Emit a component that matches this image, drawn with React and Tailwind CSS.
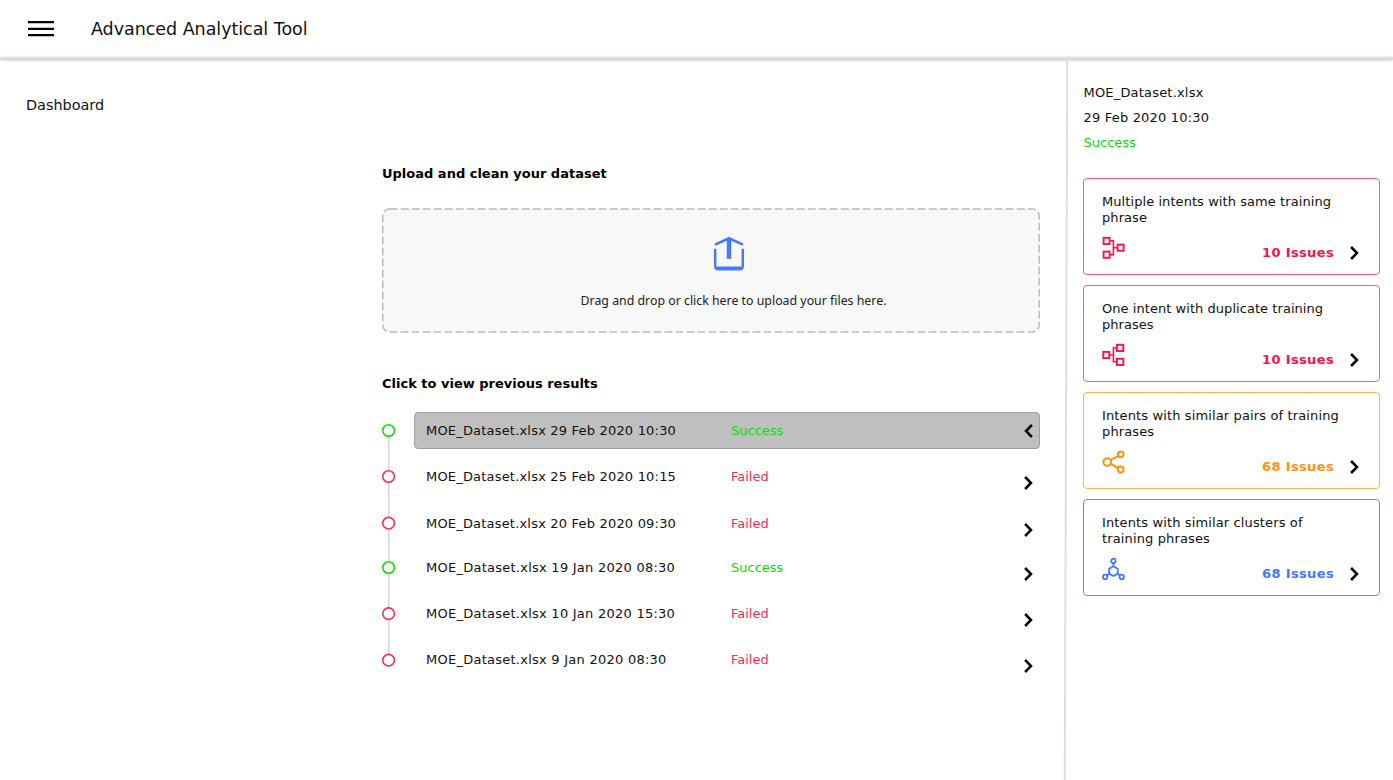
import React from "react";

const RESULTS = [
  { name: "MOE_Dataset.xlsx 29 Feb 2020 10:30", ok: true, row: "mb-[9px]", tracking: "tracking-[0.19px]", selected: true },
  { name: "MOE_Dataset.xlsx 25 Feb 2020 10:15", ok: false, row: "mb-[10px]", tracking: "tracking-[0.19px]" },
  { name: "MOE_Dataset.xlsx 20 Feb 2020 09:30", ok: false, row: "mb-[7px]", tracking: "tracking-[0.19px]" },
  { name: "MOE_Dataset.xlsx 19 Jan 2020 08:30", ok: true, row: "mb-[9px]", tracking: "tracking-[0.25px]" },
  { name: "MOE_Dataset.xlsx 10 Jan 2020 15:30", ok: false, row: "mb-[9px]", tracking: "tracking-[0.25px]" },
  { name: "MOE_Dataset.xlsx 9 Jan 2020 08:30", ok: false, row: "", tracking: "tracking-[0.25px]" },
];

const DOTS = [
  { y: 18.5, color: "#0bdc0b" },
  { y: 64.5, color: "#fb2c55" },
  { y: 111.2, color: "#fb2c55" },
  { y: 155.5, color: "#0bdc0b" },
  { y: 201.7, color: "#fb2c55" },
  { y: 248.2, color: "#fb2c55" },
];

function Chevron({ left = false }) {
  return (
    <svg className="block shrink-0" width="9" height="14" viewBox="0 0 9 14" fill="none" stroke="#000" strokeWidth="2.5">
      {left ? <path d="M7.9 1 L2 7 L7.9 13" /> : <path d="M1.1 1 L7 7 L1.1 13" />}
    </svg>
  );
}

function MergeIcon() {
  return (
    <svg className="block" width="24" height="24" viewBox="-0.4 -0.6 24 24" fill="none" stroke="#ff0f4b" strokeWidth="1.9">
      <rect x="1.2" y="1.2" width="6" height="6.2" />
      <rect x="1.2" y="15" width="6" height="6.2" />
      <rect x="15.2" y="8" width="6" height="6.2" />
      <path d="M7.2 4.2H11V18.2H7.2M11 11.1H15.2" strokeWidth="1.6" />
    </svg>
  );
}

function SplitIcon() {
  return (
    <svg className="block" width="24" height="24" viewBox="-0.4 -0.6 24 24" fill="none" stroke="#ff0f4b" strokeWidth="1.9">
      <rect x="0.9" y="8.3" width="6" height="6.2" />
      <rect x="14.5" y="1.2" width="6.4" height="6.2" />
      <rect x="14.5" y="15.2" width="6.4" height="6.2" />
      <path d="M14.5 4.4H11V18.2H14.5M6.9 11.4H11" strokeWidth="1.6" />
    </svg>
  );
}

function ShareIcon() {
  return (
    <svg className="block" width="24" height="24" viewBox="-0.4 -0.6 24 24" fill="none" stroke="#ff930f" strokeWidth="2">
      <circle cx="4.8" cy="11.4" r="3.8" />
      <circle cx="18.3" cy="3.7" r="2.9" />
      <circle cx="18.3" cy="18.9" r="2.9" />
      <path d="M8.2 9.6L15.8 5.2M8.2 13.2L15.8 17.4" />
    </svg>
  );
}

function ClusterIcon() {
  return (
    <svg className="block" width="24" height="24" viewBox="-0.4 -0.6 24 24" fill="none" stroke="#4378ff" strokeWidth="1.8">
      <path d="M11 8.7L15.3 11.1V16L11 18.4L6.7 16V11.1Z" />
      <circle cx="11" cy="3.3" r="2.2" />
      <circle cx="2.8" cy="19.3" r="2.2" />
      <circle cx="19.3" cy="19.3" r="2.2" />
      <path d="M11 5.5V8.7M6.7 16L4.6 18M15.3 16L17.4 18" />
    </svg>
  );
}

const ISSUES = [
  { lines: ["Multiple intents with same training", "phrase"], count: "10 Issues", Icon: MergeIcon, border: "border-[#fb5a76]", text: "text-[#ff0f4b]", tracking: "tracking-[0.07px]" },
  { lines: ["One intent with duplicate training", "phrases"], count: "10 Issues", Icon: SplitIcon, border: "border-[#fb5a76]", text: "text-[#ff0f4b]", tracking: "tracking-[0.05px]" },
  { lines: ["Intents with similar pairs of training", "phrases"], count: "68 Issues", Icon: ShareIcon, border: "border-[#ffb04a]", text: "text-[#ff930f]", tracking: "tracking-[0.13px]" },
  { lines: ["Intents with similar clusters of", "training phrases"], count: "68 Issues", Icon: ClusterIcon, border: "border-[#5a8cff]", text: "text-[#4378ff]", tracking: "tracking-[0.13px]" },
];

function Header() {
  return (
    <header className="flex h-[57px] shrink-0 items-center pl-7">
      <svg className="block" width="26" height="16" viewBox="0 0 26 16" fill="none" stroke="#000" strokeWidth="2.2">
        <path d="M0 1.2H26M0 7.8H26M0 14.2H26" />
      </svg>
      <h1 className="ml-[37px] text-[17.5px] leading-6 tracking-[-0.04px] whitespace-nowrap">Advanced Analytical Tool</h1>
    </header>
  );
}

function UploadZone() {
  return (
    <button className="relative mt-6 flex h-[125px] w-[658px] flex-col items-center pt-7 pl-[36px]">
      <svg className="absolute inset-0" width="658" height="125" viewBox="0 0 658 125" fill="none">
        <rect x="0.8" y="1" width="656.4" height="123" rx="7" fill="#f8f8f8" stroke="#bcbcbc" strokeWidth="1.5" strokeDasharray="8 3" />
      </svg>
      <svg className="relative block" width="32" height="36" viewBox="0 0 32 36" fill="none" stroke="#4378ff">
        <path d="M2 8.6L16 2.2L30 8.6" strokeWidth="2.6" />
        <path d="M16 2.5V22.8" strokeWidth="4.4" />
        <path d="M2.2 12.8V30Q2.2 33 5 33H27Q29.8 33 29.8 30V12.8" strokeWidth="2.4" />
        <path d="M3.5 32.4H28.5" strokeWidth="3.8" />
      </svg>
      <span className="relative mt-[19px] pl-[9px] font-['Noto_Sans',sans-serif] text-[12.35px] leading-5 whitespace-nowrap text-[#222]">
        Drag and drop or click here to upload your files here.
      </span>
    </button>
  );
}

function Timeline() {
  return (
    <svg className="block shrink-0" width="14" height="258" viewBox="0 0 14 258" fill="none">
      <path d="M6.8 18V248" stroke="#d9d9d9" strokeWidth="1.7" />
      {DOTS.map((d) => (
        <circle key={d.y} cx="6.6" cy={d.y} r="5.8" fill="#fff" stroke={d.color} strokeWidth="1.6" />
      ))}
    </svg>
  );
}

function ResultRow({ item }) {
  return (
    <button
      className={`flex h-[37px] w-[626px] items-center rounded-[4px] border pr-[6px] pl-[11px] text-left ${item.row} ${
        item.selected ? "border-[#a0a0a0] bg-[#bfbfbf]" : "border-transparent"
      }`}
    >
      <span className={`w-[305px] text-[13px] whitespace-nowrap ${item.tracking}`}>{item.name}</span>
      <span className={`flex-1 text-[13px] ${item.ok ? "text-[#0bdc0b]" : "text-[#fb2c55]"}`}>
        {item.ok ? "Success" : "Failed"}
      </span>
      <span className={item.selected ? "" : "pt-3"}>
        <Chevron left={item.selected} />
      </span>
    </button>
  );
}

function IssueCard({ issue }) {
  const { Icon } = issue;
  return (
    <button className={`flex h-[97px] w-[297px] flex-col rounded-[4px] border pt-[15px] pr-5 pl-[18px] text-left ${issue.border}`}>
      <span className={`text-[13px] leading-4 whitespace-nowrap ${issue.tracking}`}>
        {issue.lines[0]}
        <br />
        {issue.lines[1]}
      </span>
      <span className="mt-[10px] flex w-full items-start">
        <Icon />
        <span className={`ml-auto pt-[9px] text-[13px] leading-4 font-bold tracking-[0.36px] whitespace-nowrap ${issue.text}`}>{issue.count}</span>
        <span className="mt-[10px] ml-4">
          <Chevron />
        </span>
      </span>
    </button>
  );
}

export default function App() {
  return (
    <div className="flex h-[780px] w-[1393px] flex-col overflow-hidden bg-white font-['DejaVu_Sans',Verdana,sans-serif] text-[#111]">
      <Header />
      <div className="h-[2px] shrink-0 bg-[#dedede] shadow-[0_1px_3px_rgba(0,0,0,0.32)]" />
      <div className="flex min-h-0 flex-1">
        <nav className="w-[382px] shrink-0 pt-[34px] pl-[26px]">
          <a className="text-[14.4px] leading-5">Dashboard</a>
        </nav>
        <main className="w-[683px] shrink-0 pt-[105px]">
          <h2 className="text-[13px] leading-5 font-bold whitespace-nowrap text-black">Upload and clean your dataset</h2>
          <UploadZone />
          <h2 className="mt-[41px] text-[13px] leading-5 font-bold whitespace-nowrap text-black">Click to view previous results</h2>
          <div className="mt-[18px] flex gap-[18px]">
            <Timeline />
            <div className="flex flex-col">
              {RESULTS.map((item) => (
                <ResultRow key={item.name} item={item} />
              ))}
            </div>
          </div>
        </main>
        <div className="w-[1.5px] shrink-0 -skew-x-[0.2deg] bg-[#dedede]" />
        <aside className="pt-[21px] pl-[16.5px]">
          <div className="pl-[0.5px] text-[13px] leading-[25px] whitespace-nowrap">
            <p className="tracking-[0.19px]">MOE_Dataset.xlsx</p>
            <p className="tracking-[0.19px]">29 Feb 2020 10:30</p>
            <p className="text-[#0bdc0b]">Success</p>
          </div>
          <div className="mt-[23px] flex flex-col gap-[10px]">
            {ISSUES.map((issue) => (
              <IssueCard key={issue.lines[0]} issue={issue} />
            ))}
          </div>
        </aside>
      </div>
    </div>
  );
}
